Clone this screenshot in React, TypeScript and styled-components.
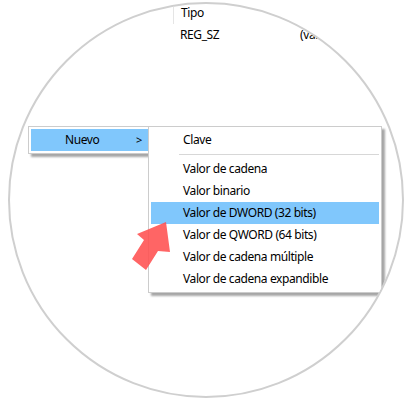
import React from 'react';
import styled, { createGlobalStyle } from 'styled-components';

const Global = createGlobalStyle`
  html, body { margin: 0; padding: 0; background: #fff; }
  body { font-family: "Noto Sans", "Segoe UI", sans-serif; color: #000; letter-spacing: -0.4px; }
`;

const Page = styled.div`
  width: 410px;
  height: 399px;
  box-sizing: border-box;
  padding: 2px 0 0 8px;
  background: #fff;
`;

const Lens = styled.div`
  position: relative;
  width: 396px;
  height: 396px;
  box-sizing: border-box;
  border: 2px solid #cfcfcf;
  border-radius: 50%;
  overflow: hidden;
  background: #fff;
`;

const ListView = styled.div`
  margin: -4px 0 0 163px;
  display: flex;
  flex-direction: column;
  font-size: 12px;
`;

const HeaderRow = styled.div`
  display: flex;
  height: 24px;
  align-items: center;
`;

const HeaderCell = styled.div`
  width: 120px;
  height: 24px;
  box-sizing: border-box;
  padding: 1px 0 0 7px;
  line-height: 24px;
  border-left: 1px solid #e5e5e5;
`;

const DataRow = styled.div`
  display: flex;
  height: 22px;
  line-height: 22px;
`;

const Cell = styled.div<{ $w?: number }>`
  width: ${(p) => (p.$w ? `${p.$w}px` : 'auto')};
  flex-shrink: 0;
  box-sizing: border-box;
  padding-left: 7px;
  white-space: nowrap;
`;

const Menu = styled.div<{ $left: number; $top: number; $width: number }>`
  position: absolute;
  left: ${(p) => p.$left}px;
  top: ${(p) => p.$top}px;
  width: ${(p) => p.$width}px;
  box-sizing: border-box;
  background: #fff;
  border: 1px solid #cccccc;
  padding: 2px;
  box-shadow: 3px 3px 2px rgba(0, 0, 0, 0.35);
  font-size: 12px;
  display: flex;
  flex-direction: column;
`;

const ParentItem = styled.div`
  height: 22px;
  line-height: 22px;
  background: #80c7fc;
  display: flex;
  align-items: center;
  padding-left: 34px;
  margin-right: -3px;
`;

const ItemLabel = styled.span`
  flex: 1;
`;

const Chevron = styled.span`
  width: 13px;
  font-size: 11px;
`;

const Item = styled.div<{ $active?: boolean }>`
  height: 22px;
  line-height: 22px;
  padding-left: 32px;
  white-space: nowrap;
  background: ${(p) => (p.$active ? '#80c7fc' : 'transparent')};
`;

const Separator = styled.div`
  height: 7px;
  display: flex;
  align-items: center;
  padding-left: 28px;
  &::after {
    content: '';
    flex: 1;
    height: 1px;
    background: #d7d7d7;
  }
`;

const Pointer = styled.svg`
  position: absolute;
  left: 118px;
  top: 214px;
  width: 47px;
  height: 56px;
  overflow: visible;
`;

const items = [
  'Valor de cadena',
  'Valor binario',
  'Valor de DWORD (32 bits)',
  'Valor de QWORD (64 bits)',
  'Valor de cadena múltiple',
  'Valor de cadena expandible',
];

export default function App() {
  return (
    <>
      <Global />
      <Page>
        <Lens>
          <ListView>
            <HeaderRow>
              <HeaderCell>Tipo</HeaderCell>
            </HeaderRow>
            <DataRow>
              <Cell $w={120}>REG_SZ</Cell>
              <Cell>(valor no establecido)</Cell>
            </DataRow>
          </ListView>

          <Menu $left={18} $top={122} $width={121}>
            <ParentItem>
              <ItemLabel>Nuevo</ItemLabel>
              <Chevron>&gt;</Chevron>
            </ParentItem>
          </Menu>

          <Menu $left={138} $top={122} $width={234}>
            <Item>Clave</Item>
            <Separator />
            {items.map((t, i) => (
              <Item key={t} $active={i === 2}>
                {t}
              </Item>
            ))}
          </Menu>

          <Pointer viewBox="0 0 47 56">
            <polygon
              points="38,4 42,34 30,33 18,52 4,41 16,22 9,16"
              fill="#ff5050"
              fillOpacity={0.88}
            />
          </Pointer>
        </Lens>
      </Page>
    </>
  );
}
